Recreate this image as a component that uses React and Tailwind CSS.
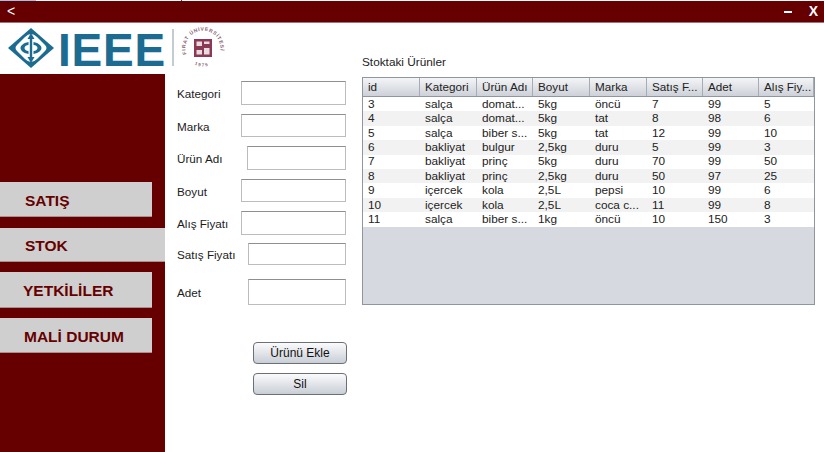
import React from 'react';

const columns = ['id', 'Kategori', 'Ürün Adı', 'Boyut', 'Marka', 'Satış F...', 'Adet', 'Alış Fiy...'];

const rows = [
    ['3', 'salça', 'domat...', '5kg', 'öncü', '7', '99', '5'],
    ['4', 'salça', 'domat...', '5kg', 'tat', '8', '98', '6'],
    ['5', 'salça', 'biber s...', '5kg', 'tat', '12', '99', '10'],
    ['6', 'bakliyat', 'bulgur', '2,5kg', 'duru', '5', '99', '3'],
    ['7', 'bakliyat', 'prinç', '5kg', 'duru', '70', '99', '50'],
    ['8', 'bakliyat', 'prinç', '2,5kg', 'duru', '50', '97', '25'],
    ['9', 'içercek', 'kola', '2,5L', 'pepsi', '10', '99', '6'],
    ['10', 'içercek', 'kola', '2,5L', 'coca c...', '11', '99', '8'],
    ['11', 'salça', 'biber s...', '1kg', 'öncü', '10', '150', '3'],
];

const gridCols = 'grid grid-cols-[57px_57px_56px_57px_57px_56px_56px_55px]';

const NavItem = ({ label, className }) => (
    <div className={`flex items-center pt-[3px] bg-[#cfcfcf] border-b border-[#a89090] text-[15.5px] font-bold text-[#660000] ${className}`}>
        {label}
    </div>
);

const Field = ({ label, className, inputClass }) => (
    <div className={`flex items-center justify-between ${className}`}>
        <span className="pt-[2px] text-[11.7px] text-[#1c1c1c]">{label}</span>
        <div className={`h-full border border-[#bcbcbc] border-t-[#8f8f8f] bg-white ${inputClass}`} />
    </div>
);

const FormButton = ({ label, className }) => (
    <div className={`flex items-center justify-center h-[22px] w-[94px] rounded-[4px] border border-[#6b6f76] bg-gradient-to-b from-[#fbfbfc] to-[#c9ced6] text-[12px] text-[#111] ${className}`}>
        {label}
    </div>
);

const Logo = () => (
    <div className="flex items-start h-[51px] pl-[8px] pt-[5px]">
        <svg width="46" height="41" viewBox="0 0 46 41">
            <path d="M23 0 L46 20 L23 40 L0 20 Z" fill="#1b6c90" />
            <path d="M23 6 Q26 6 29 9 L37 17 Q40 20 37 23 L29 31 Q26 34 23 34 Q20 34 17 31 L9 23 Q6 20 9 17 L17 9 Q20 6 23 6 Z" fill="#ffffff" />
            <path d="M23 5 L26.5 11 H24.2 V29 H26.5 L23 35 L19.5 29 H21.8 V11 H19.5 Z" fill="#1b6c90" />
            <path d="M20.5 14 C15 15 12.5 18 12.5 20 C12.5 22 15 25 20.5 26 V23 C18 22.8 16.5 21.5 16.5 20 C16.5 18.5 18 17.2 20.5 17 Z" fill="#1b6c90" />
            <path d="M25.5 14 C31 15 33.5 18 33.5 20 C33.5 22 31 25 25.5 26 V23 C28 22.8 29.5 21.5 29.5 20 C29.5 18.5 28 17.2 25.5 17 Z" fill="#1b6c90" />
        </svg>
        <span className="ml-[4px] -mt-[4px] text-[46px] leading-[52px] font-bold text-[#1b6c90] tracking-[0.75px]">IEEE</span>
        <div className="ml-[6px] mt-[1px] w-[2px] h-[37px] bg-[#c3ccd1]" />
        <svg width="46" height="46" viewBox="0 0 46 46" className="ml-[6px] -mt-[3px]">
            <defs>
                <path id="seal-top" d="M6.5 29 A17.5 17.5 0 1 1 39.5 29" />
                <path id="seal-bottom" d="M12 38 A19 19 0 0 0 34 38" />
            </defs>
            <text fontSize="5" fontWeight="700" fill="#86606e" letterSpacing="0.7">
                <textPath href="#seal-top">FIRAT ÜNİVERSİTESİ</textPath>
            </text>
            <text fontSize="4.5" fontWeight="700" fill="#86606e" letterSpacing="1.2">
                <textPath href="#seal-bottom" startOffset="3">1975</textPath>
            </text>
            <rect x="14" y="14" width="18" height="18" fill="#8a3a55" />
            <path d="M16.5 16.5 H22 V21 H16.5 Z M24 16.5 H29.5 V19 H24 Z M16.5 25 H22 V29.5 H16.5 Z M24 23 H29.5 V29.5 H24 Z" fill="#e8dce0" />
        </svg>
    </div>
);

const App = () => {
    return (
        <div className="w-[824px] h-[452px] bg-white overflow-hidden flex flex-col text-[#222] [font-family:'Liberation_Sans',Arial,sans-serif]">
            <div className="flex h-px shrink-0">
                <div className="w-[36px] bg-[#9dc3e6]" />
                <div className="w-[145px]" />
                <div className="w-px bg-[#33465c]" />
            </div>
            <div className="flex items-center justify-between h-[22px] shrink-0 bg-[#660000] border-b border-[#a87070] text-white font-bold pl-[7px] pr-[6px]">
                <span className="text-[14px] font-normal">&lt;</span>
                <div className="flex items-center gap-[17px] text-[14px]">
                    <span className="w-[8px] h-[2px] bg-white" />
                    <span>X</span>
                </div>
            </div>
            <div className="flex flex-1 min-h-0">
                <div className="w-[362px] flex flex-col shrink-0">
                    <Logo />
                    <div className="flex flex-1">
                        <div className="w-[165px] h-[378px] bg-[#660000] pt-[108px]">
                            <NavItem label="SATIŞ" className="w-[152px] h-[35px] pl-[25px]" />
                            <NavItem label="STOK" className="w-[165px] h-[34px] mt-[11px] pl-[25px]" />
                            <NavItem label="YETKİLİLER" className="w-[152px] h-[36px] mt-[10px] pl-[23px]" />
                            <NavItem label="MALİ DURUM" className="w-[152px] h-[35px] mt-[10px] pl-[24px]" />
                        </div>
                        <div className="w-[169px] ml-[12px] pt-[7px] flex flex-col">
                            <Field label="Kategori" className="h-[24px]" inputClass="w-[105px]" />
                            <Field label="Marka" className="h-[23px] mt-[9px]" inputClass="w-[105px]" />
                            <Field label="Ürün Adı" className="h-[24px] mt-[9px]" inputClass="w-[99px]" />
                            <Field label="Boyut" className="h-[23px] mt-[9px]" inputClass="w-[105px]" />
                            <Field label="Alış Fiyatı" className="h-[24px] mt-[9px]" inputClass="w-[105px]" />
                            <Field label="Satış Fiyatı" className="h-[22px] mt-[8px]" inputClass="w-[98px]" />
                            <Field label="Adet" className="h-[26px] mt-[14px]" inputClass="w-[98px]" />
                            <FormButton label="Ürünü Ekle" className="mt-[37px] ml-[76px]" />
                            <FormButton label="Sil" className="mt-[9px] ml-[76px]" />
                        </div>
                    </div>
                </div>
                <div className="flex-1 pt-[32px]">
                    <div className="text-[11.8px] leading-[14px] text-[#222]">Stoktaki Ürünler</div>
                    <div className="mt-[8px] w-[453px] h-[228px] border border-[#8f96a0] bg-[#d6d9df] flex flex-col">
                        <div className={`${gridCols} h-[19px] border-b border-[#8f96a0] bg-gradient-to-b from-[#f4f5f7] to-[#cdd1d8]`}>
                            {columns.map((col) => (
                                <div key={col} className="flex items-center pl-[5px] pb-[1px] text-[11.7px] text-[#222] border-r border-[#a6acb5] whitespace-nowrap overflow-hidden">
                                    {col}
                                </div>
                            ))}
                        </div>
                        {rows.map((row, i) => (
                            <div key={row[0]} className={`${gridCols} h-[14.4px] ${i % 2 === 0 ? 'bg-white' : 'bg-[#f2f2f2]'}`}>
                                {row.map((cell, j) => (
                                    <div key={j} className="flex items-center pl-[5px] pt-[1px] text-[11.8px] leading-none text-[#222] whitespace-nowrap overflow-hidden">
                                        {cell}
                                    </div>
                                ))}
                            </div>
                        ))}
                    </div>
                </div>
            </div>
        </div>
    );
};

export default App;
